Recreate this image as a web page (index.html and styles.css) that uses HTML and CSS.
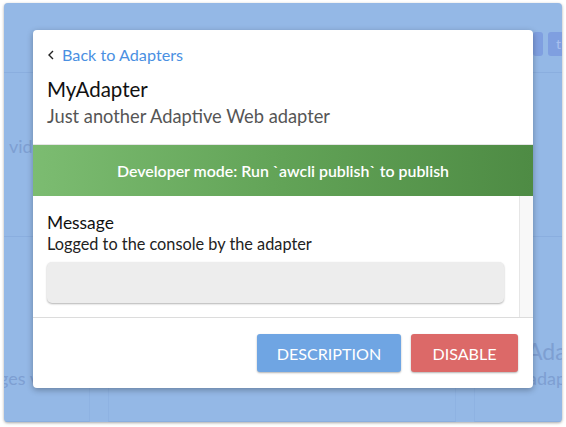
FILE: index.html
```html
<!DOCTYPE html>
<html>
<head>
<meta charset="utf-8">
<link rel="stylesheet" href="styles.css">
</head>
<body>
<div class="window">
  <div class="app">
    <div class="topbar">
      <div class="top-actions">
        <span class="tbtn"></span>
        <span class="tbtn">t</span>
      </div>
    </div>
    <div class="grid">
      <div class="col col-left">
        <div class="card"><span class="bgtext t1">vid</span></div>
        <div class="card"><span class="bgtext t2">ges v</span></div>
      </div>
      <div class="col col-mid">
        <div class="card"></div>
        <div class="card"></div>
      </div>
      <div class="col col-right">
        <div class="card"></div>
        <div class="card"><span class="bgtitle">Ada</span><span class="bgtext t3">adap</span></div>
      </div>
    </div>
  </div>

  <div class="modal">
    <div class="modal-head">
      <a class="back"><svg class="chev" width="8" height="10" viewBox="0 0 8 10"><path d="M6 1 L2 5 L6 9" fill="none" stroke="#222" stroke-width="1.4"/></svg>Back to Adapters</a>
      <h1 class="title">MyAdapter</h1>
      <p class="subtitle">Just another Adaptive Web adapter</p>
    </div>
    <div class="devbar">Developer mode: Run `awcli publish` to publish</div>
    <div class="modal-body">
      <div class="body-content">
        <div class="field-label">Message</div>
        <div class="field-help">Logged to the console by the adapter</div>
        <div class="input"></div>
      </div>
      <div class="scrolltrack"></div>
    </div>
    <div class="modal-foot">
      <button class="btn btn-blue">DESCRIPTION</button>
      <button class="btn btn-red">DISABLE</button>
    </div>
  </div>
</div>
</body>
</html>
```

FILE: styles.css
```css
* { box-sizing: border-box; }
html, body { margin: 0; padding: 0; background: #ffffff; }
body { font-family: "Lato", "Noto Sans", sans-serif; width: 566px; height: 427px; overflow: hidden; }

.window {
  position: relative;
  margin: 3px 4px 0 4px;
  height: 419px;
  background: #94b8e6;
  border-radius: 4px;
  box-shadow: 0 1px 3px rgba(0,0,0,0.35);
  overflow: hidden;
}

.app { height: 100%; display: flex; flex-direction: column; }
.topbar {
  height: 70px;
  border-bottom: 1px solid #8aaedf;
  display: flex;
  justify-content: flex-end;
  padding-top: 29px;
}
.top-actions { display: flex; gap: 5px; margin-right: -6px; }
.tbtn {
  width: 10px; height: 24px;
  background: #7f9fe0;
  border-radius: 3px;
  color: #a9c0ee;
  font-size: 14px;
  line-height: 24px;
  padding-left: 8px;
}
.tbtn:last-child { width: 20px; }

.grid { flex: 1; display: flex; gap: 18px; }
.col { display: flex; flex-direction: column; }
.col-left { width: 86px; }
.col-mid { flex: 1; }
.col-right { width: 88px; }
.card {
  position: relative;
  border-left: 1px solid #8eb2e2;
  border-right: 1px solid #8eb2e2;
  border-bottom: 1px solid #8aaedf;
  flex: 1;
}
.col-left .card { border-left: none; }
.col-right .card { border-right: none; }
.card:first-child { flex: 0 0 164px; }
.bgtext { position: absolute; color: #7e9fd2; font-size: 18px; white-space: nowrap; }
.t1 { left: 5px; top: 62px; }
.t2 { left: -5px; top: 130px; }
.bgtitle { position: absolute; left: 52px; top: 100px; font-size: 23px; color: #7e9fd2; }
.t3 { left: 53px; top: 130px; }

.modal {
  position: absolute;
  left: 29px; top: 27px;
  width: 500px; height: 358px;
  background: #fff;
  border-radius: 4px;
  box-shadow: 0 2px 6px rgba(0,0,0,0.3);
  display: flex; flex-direction: column;
  overflow: hidden;
}
.modal-head { padding: 16px 14px 0 14px; height: 114px; }
.back { display: flex; align-items: center; color: #4a90e2; font-size: 16.2px; line-height: 18px; }
.chev { margin: 0 7px 0 0; }
.title { margin: 13px 0 0 0; font-size: 20.5px; font-weight: 400; color: #111; line-height: 24px; }
.subtitle { margin: 4px 0 0 0; font-size: 18.3px; color: #555; line-height: 22px; }

.devbar {
  height: 52px;
  background: linear-gradient(90deg, #7cbc71 0%, #62a357 50%, #4e8b44 100%);
  border-top: 1px solid #e5e5e5;
  color: #fff; font-size: 15.9px; font-weight: 600;
  display: flex; align-items: center; justify-content: center;
}

.modal-body { height: 122px; display: flex; border-bottom: 1px solid #dcdcdc; }
.body-content { flex: 1; padding: 16px 15px 0 14px; }
.field-label { font-size: 17.4px; color: #111; line-height: 22px; }
.field-help { font-size: 16.3px; color: #222; line-height: 20px; }
.input {
  margin-top: 8px;
  height: 41px;
  background: #ededed;
  border-radius: 5px;
  box-shadow: 0 1px 2px rgba(0,0,0,0.3);
}
.scrolltrack { width: 14px; background: #f8f8f8; border-left: 1px solid #e6e6e6; }

.modal-foot { flex: 1; display: flex; justify-content: flex-end; align-items: flex-start; gap: 10px; padding: 16px 15px 0 0; }
.btn {
  height: 38px;
  border: none; border-radius: 3px;
  color: #fff; font-family: inherit; font-size: 16.1px;
  box-shadow: 0 1px 2px rgba(0,0,0,0.3);
  padding: 0;
}
.btn-blue { width: 144px; background: #6fa5e3; }
.btn-red { width: 107px; background: #dc6968; }
```
